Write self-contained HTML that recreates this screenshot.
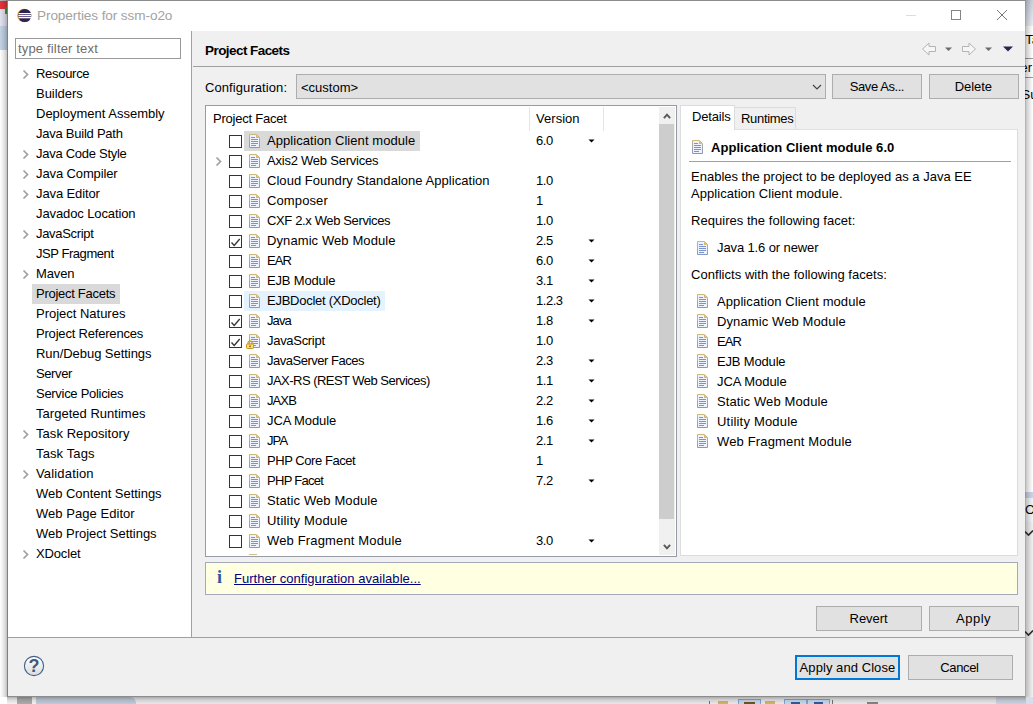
<!DOCTYPE html>
<html><head><meta charset="utf-8"><title>Properties for ssm-o2o</title>
<style>
html,body{margin:0;padding:0;}
body{width:1033px;height:704px;overflow:hidden;position:relative;background:#fff;font-family:"Liberation Sans",sans-serif;font-size:13px;color:#000;}
div,span,svg,a{position:absolute;box-sizing:border-box;}
.t{white-space:nowrap;line-height:16px;height:16px;letter-spacing:-0.1px;margin-top:1px;}
.b{font-weight:bold;}
.btn{background:#e1e1e1;border:1px solid #adadad;height:25px;}
.btn span{position:absolute;left:0;right:0;top:0;text-align:center;line-height:23px;white-space:nowrap;}
.cb{width:13px;height:13px;border:1px solid #333;background:#fff;}
.doc,.chev{display:block;}
</style></head><body>
<svg width="0" height="0" style="left:0;top:0"><defs><linearGradient id="dg" x1="0" y1="0" x2="0" y2="1"><stop offset="0" stop-color="#cdb77e"/><stop offset="0.45" stop-color="#a9a9ac"/><stop offset="1" stop-color="#8497c6"/></linearGradient></defs></svg>
<!-- backdrop -->
<div style="left:0;top:0;width:8px;height:704px;background:#fff"></div>
<div style="left:0;top:0;width:8px;height:9px;background:#e2353f"></div>
<div style="left:0;top:0;width:8px;height:1px;background:#b9b9b9"></div>
<div style="left:0;top:9px;width:8px;height:17px;background:#e2e3ef"></div>
<div style="left:5px;top:7px;width:3px;height:7px;background:#3f9a3f"></div>
<div style="left:0;top:26px;width:8px;height:24px;background:#c3d3e6"></div>
<div style="left:1025px;top:0;width:8px;height:704px;background:#fff"></div>
<div style="left:1025px;top:0;width:8px;height:26px;background:linear-gradient(#cbd1df,#eceff5)"></div>
<div style="left:1025px;top:58px;width:8px;height:1px;background:#9a9a9a"></div>
<div style="left:1025px;top:77px;width:8px;height:1px;background:#9a9a9a"></div>
<span class="t" style="left:1025.300px;top:31px;letter-spacing:0">Ta</span>
<span class="t" style="left:1020.500px;top:59px;letter-spacing:0">er</span>
<span class="t" style="left:1021.500px;top:86px;letter-spacing:0">Su</span>
<div style="left:1025px;top:492px;width:8px;height:212px;background:#f0f0f0"></div>
<div style="left:1025px;top:492px;width:8px;height:6px;background:#cdd5e9"></div>
<div style="left:1025px;top:498px;width:8px;height:24px;background:#f4f5f8"></div>
<span class="t" style="left:1025px;top:501px;letter-spacing:0">O</span>
<svg style="left:1025px;top:530px" width="8" height="8" viewBox="0 0 8 8"><path d="M0 1.500L3.500 5L8 0.500" fill="none" stroke="#333" stroke-width="1.600"/></svg>
<svg style="left:1025px;top:630px" width="8" height="8" viewBox="0 0 8 8"><path d="M0 1.500L3.500 5L8 0.500" fill="none" stroke="#333" stroke-width="1.600"/></svg>
<div style="left:0;top:696px;width:1033px;height:8px;background:#f4f4f6"></div>
<div style="left:0;top:696px;width:17px;height:8px;background:#fff"></div>
<div style="left:17px;top:696px;width:15px;height:8px;background:#b4b4b4"></div>
<div style="left:32px;top:696px;width:4px;height:8px;background:#fff"></div>
<div style="left:36px;top:697px;width:100px;height:10px;background:#c9d5e5;border-radius:0 6px 0 0"></div>
<div style="left:709px;top:701px;width:1px;height:3px;background:#777"></div>
<div style="left:718px;top:701px;width:10px;height:3px;background:#d9bf6a"></div>
<div style="left:738px;top:699px;width:23px;height:6px;background:#cfe3f7;border:1px solid #7fb0e0"></div>
<div style="left:744px;top:702px;width:11px;height:2px;background:#6b5a2a"></div>
<div style="left:765px;top:701px;width:10px;height:3px;background:#d9bf6a"></div>
<div style="left:784px;top:699px;width:23px;height:6px;background:#cfe3f7;border:1px solid #7fb0e0"></div>
<div style="left:807px;top:699px;width:23px;height:6px;background:#cfe3f7;border:1px solid #7fb0e0"></div>
<div style="left:791px;top:702px;width:9px;height:2px;background:#2f5fa8"></div>
<div style="left:814px;top:702px;width:9px;height:2px;background:#2f5fa8"></div>
<div style="left:832px;top:700px;width:1px;height:4px;background:#777"></div>
<div style="left:867px;top:702px;width:11px;height:2px;background:#8a8a8a"></div>
<div style="left:996px;top:697px;width:37px;height:7px;background:#d6deec"></div>
<!-- window -->
<div style="left:0;top:0;width:7px;height:697px;background:linear-gradient(to left,rgba(0,0,0,.24),rgba(0,0,0,.10) 3px,rgba(0,0,0,0) 7px)"></div>
<div style="left:1025px;top:0;width:8px;height:697px;background:linear-gradient(to right,rgba(0,0,0,.34),rgba(0,0,0,.20) 1.500px,rgba(0,0,0,.08) 5px,rgba(0,0,0,0) 8px)"></div>
<div style="left:7px;top:697px;width:1019px;height:7px;background:linear-gradient(to bottom,rgba(0,0,0,.30),rgba(0,0,0,.14) 3px,rgba(0,0,0,.05) 7px)"></div>
<div id="win" style="left:7px;top:0;width:1018px;height:697px;background:#f0f0f0;border:1px solid #8c8c8c;border-left-color:#808080;border-top-color:#8c8c8c;border-right:none"></div>
<div style="left:8px;top:1px;width:1017px;height:30px;background:#fff"></div>
<!-- title -->
<svg style="left:17px;top:8px" width="15" height="15" viewBox="0 0 15 15"><circle cx="7" cy="7.5" r="6.8" fill="#f7941e"/><circle cx="7.8" cy="7.5" r="6.6" fill="#2c2255"/><rect x="1.6" y="5" width="12.6" height="1.3" fill="#fff"/><rect x="1.3" y="7" width="13" height="1.3" fill="#fff"/><rect x="1.6" y="9" width="12.6" height="1.3" fill="#fff"/></svg>
<span id="t1" class="t" style="left:37px;top:7px;letter-spacing:-0.100px;color:#a2a2a2;font-size:13.600px;">Properties for ssm-o2o</span>
<svg style="left:906px;top:10px" width="12" height="10" viewBox="0 0 12 10"><path d="M0 5.5H10" stroke="#ddd" stroke-width="1"/></svg>
<svg style="left:950px;top:9px" width="12" height="12" viewBox="0 0 12 12"><rect x="1.5" y="1.5" width="9" height="9" fill="none" stroke="#858585" stroke-width="1"/></svg>
<svg style="left:996px;top:9px" width="12" height="12" viewBox="0 0 12 12"><path d="M1 1L11 11M11 1L1 11" stroke="#777" stroke-width="1"/></svg>
<!-- left pane -->
<div style="left:8px;top:31px;width:183px;height:606px;background:#fff"></div>
<div style="left:191px;top:31px;width:1px;height:606px;background:#a0a0a0"></div>
<div style="left:15px;top:38px;width:166px;height:21px;border:1px solid #999;background:#fff"></div>
<span id="t2" class="t" style="left:18px;top:40px;letter-spacing:0.166px;color:#6d6d6d;">type filter text</span>
<svg class="chev" style="left:22px;top:69px" width="7" height="11" viewBox="0 0 7 11"><path d="M1.5 1.5L5.5 5.5L1.500 9.500" fill="none" stroke="#a0a0a0" stroke-width="1.700"/></svg>
<span id="t3" class="t" style="left:36px;top:65px;letter-spacing:-0.292px;">Resource</span>
<span id="t4" class="t" style="left:36px;top:85px;letter-spacing:-0.024px;">Builders</span>
<span id="t5" class="t" style="left:36px;top:105px;letter-spacing:-0.001px;">Deployment Assembly</span>
<span id="t6" class="t" style="left:36px;top:125px;letter-spacing:-0.246px;">Java Build Path</span>
<svg class="chev" style="left:22px;top:149px" width="7" height="11" viewBox="0 0 7 11"><path d="M1.5 1.5L5.5 5.5L1.500 9.500" fill="none" stroke="#a0a0a0" stroke-width="1.700"/></svg>
<span id="t7" class="t" style="left:36px;top:145px;letter-spacing:-0.277px;">Java Code Style</span>
<svg class="chev" style="left:22px;top:169px" width="7" height="11" viewBox="0 0 7 11"><path d="M1.5 1.5L5.5 5.5L1.500 9.500" fill="none" stroke="#a0a0a0" stroke-width="1.700"/></svg>
<span id="t8" class="t" style="left:36px;top:165px;letter-spacing:-0.116px;">Java Compiler</span>
<svg class="chev" style="left:22px;top:189px" width="7" height="11" viewBox="0 0 7 11"><path d="M1.5 1.5L5.5 5.5L1.500 9.500" fill="none" stroke="#a0a0a0" stroke-width="1.700"/></svg>
<span id="t9" class="t" style="left:36px;top:185px;letter-spacing:-0.115px;">Java Editor</span>
<span id="t10" class="t" style="left:36px;top:205px;letter-spacing:-0.106px;">Javadoc Location</span>
<svg class="chev" style="left:22px;top:229px" width="7" height="11" viewBox="0 0 7 11"><path d="M1.5 1.5L5.5 5.5L1.500 9.500" fill="none" stroke="#a0a0a0" stroke-width="1.700"/></svg>
<span id="t11" class="t" style="left:36px;top:225px;letter-spacing:-0.311px;">JavaScript</span>
<span id="t12" class="t" style="left:36px;top:245px;letter-spacing:-0.442px;">JSP Fragment</span>
<svg class="chev" style="left:22px;top:269px" width="7" height="11" viewBox="0 0 7 11"><path d="M1.5 1.5L5.5 5.5L1.500 9.500" fill="none" stroke="#a0a0a0" stroke-width="1.700"/></svg>
<span id="t13" class="t" style="left:36px;top:265px;letter-spacing:-0.108px;">Maven</span>
<div style="left:32px;top:284px;width:88px;height:20px;background:#d9d9d9"></div>
<span id="t14" class="t" style="left:36px;top:285px;letter-spacing:-0.276px;">Project Facets</span>
<span id="t15" class="t" style="left:36px;top:305px;letter-spacing:-0.014px;">Project Natures</span>
<span id="t16" class="t" style="left:36px;top:325px;letter-spacing:-0.192px;">Project References</span>
<span id="t17" class="t" style="left:36px;top:345px;letter-spacing:-0.051px;">Run/Debug Settings</span>
<span id="t18" class="t" style="left:36px;top:365px;letter-spacing:-0.399px;">Server</span>
<span id="t19" class="t" style="left:36px;top:385px;letter-spacing:-0.291px;">Service Policies</span>
<span id="t20" class="t" style="left:36px;top:405px;letter-spacing:0.023px;">Targeted Runtimes</span>
<svg class="chev" style="left:22px;top:429px" width="7" height="11" viewBox="0 0 7 11"><path d="M1.5 1.5L5.5 5.5L1.500 9.500" fill="none" stroke="#a0a0a0" stroke-width="1.700"/></svg>
<span id="t21" class="t" style="left:36px;top:425px;letter-spacing:0.065px;">Task Repository</span>
<span id="t22" class="t" style="left:36px;top:445px;letter-spacing:0.128px;">Task Tags</span>
<svg class="chev" style="left:22px;top:469px" width="7" height="11" viewBox="0 0 7 11"><path d="M1.5 1.5L5.5 5.5L1.500 9.500" fill="none" stroke="#a0a0a0" stroke-width="1.700"/></svg>
<span id="t23" class="t" style="left:36px;top:465px;letter-spacing:0.162px;">Validation</span>
<span id="t24" class="t" style="left:36px;top:485px;letter-spacing:-0.033px;">Web Content Settings</span>
<span id="t25" class="t" style="left:36px;top:505px;letter-spacing:0.047px;">Web Page Editor</span>
<span id="t26" class="t" style="left:36px;top:525px;letter-spacing:-0.029px;">Web Project Settings</span>
<svg class="chev" style="left:22px;top:549px" width="7" height="11" viewBox="0 0 7 11"><path d="M1.5 1.5L5.5 5.5L1.500 9.500" fill="none" stroke="#a0a0a0" stroke-width="1.700"/></svg>
<span id="t27" class="t" style="left:36px;top:545px;letter-spacing:-0.139px;">XDoclet</span>
<!-- right header -->
<span id="t28" class="t b" style="left:205px;top:42px;letter-spacing:-0.561px;font-size:13.500px;">Project Facets</span>
<div style="left:193px;top:66px;width:832px;height:1px;background:#a0a0a0"></div>
<svg style="left:921px;top:41px" width="100" height="16" viewBox="0 0 100 16">
<path d="M1.5 8L8 2V5.5H14.5V10.5H8V14Z" fill="#f6f6f6" stroke="#b4b4b4"/>
<path d="M24 6.5H31L27.5 10Z" fill="#6c6c6c"/>
<path d="M54.500 8L48 2V5.500H41.500V10.500H48V14Z" fill="#f6f6f6" stroke="#b4b4b4"/>
<path d="M64 6.500H71L67.500 10Z" fill="#6c6c6c"/>
<path d="M82 5.500H92L87 10.500Z" fill="#2d2150"/>
</svg>
<span id="t29" class="t" style="left:205px;top:79px;letter-spacing:0.081px;">Configuration:</span>
<div style="left:296px;top:74px;width:530px;height:25px;background:#e1e1e1;border:1px solid #adadad"></div>
<span id="t30" class="t" style="left:301px;top:79px;letter-spacing:0.001px;">&lt;custom&gt;</span>
<svg style="left:812px;top:84px" width="10" height="7" viewBox="0 0 10 7"><path d="M1 1L5 5L9 1" fill="none" stroke="#444" stroke-width="1.2"/></svg>
<div class="btn" style="left:832px;top:74px;width:90px"></div>
<div class="btn" style="left:929px;top:74px;width:90px"></div>
<!-- table -->
<div style="left:205px;top:105px;width:472px;height:452px;background:#fff;border:1px solid #969ba7"></div>
<span id="t31" class="t" style="left:849.8px;top:78px;letter-spacing:-0.427px;">Save As...</span>
<span id="t32" class="t" style="left:954.8px;top:78px;letter-spacing:-0.076px;">Delete</span>
<span id="t33" class="t" style="left:213px;top:110px;letter-spacing:-0.224px;">Project Facet</span>
<span id="t34" class="t" style="left:536px;top:110px;letter-spacing:0.038px;">Version</span>
<div style="left:529px;top:107px;width:1px;height:24px;background:#e5e5e5"></div>
<div style="left:603px;top:107px;width:1px;height:24px;background:#e5e5e5"></div>
<div style="left:659px;top:107px;width:16px;height:448px;background:#f0f0f0"></div>
<div style="left:659px;top:124px;width:15px;height:395px;background:#cdcdcd"></div>
<svg style="left:662px;top:111px" width="10" height="10" viewBox="0 0 10 10"><path d="M1.900 7.200L5 3.700L8.100 7.200" fill="none" stroke="#5a5a5a" stroke-width="2"/></svg>
<svg style="left:662px;top:541px" width="10" height="10" viewBox="0 0 10 10"><path d="M1.900 3.800L5 7.300L8.100 3.800" fill="none" stroke="#5a5a5a" stroke-width="2"/></svg>
<div style="left:244px;top:131px;width:176px;height:20px;background:#d9d9d9"></div>
<div class="cb" style="left:229px;top:135px"></div>
<svg class="doc" style="left:249px;top:134px" width="11" height="14" viewBox="0 0 11 14"><path d="M0.5 0.5H7.500L10.500 3.500V13.500H0.500Z" fill="#edf2fc" stroke="url(#dg)"/><path d="M7 0.500V4H10.500Z" fill="#d8ba70"/><path d="M2 3.500H6M2 5.500H9M2 7.500H9M2 9.500H9M2 11.500H7" stroke="#7b93cb" stroke-width="1"/></svg>
<span id="t35" class="t" style="left:267px;top:132px;letter-spacing:0.062px;">Application Client module</span>
<span id="t36" class="t" style="left:536px;top:132px;letter-spacing:-0.389px;">6.0</span>
<svg style="left:588px;top:139px" width="7" height="4" viewBox="0 0 7 4"><path d="M0.500 0.500H6.500L3.500 3.500Z" fill="#000"/></svg>
<svg class="chev" style="left:215px;top:156px" width="7" height="11" viewBox="0 0 7 11"><path d="M1.5 1.5L5.5 5.5L1.500 9.500" fill="none" stroke="#a0a0a0" stroke-width="1.700"/></svg>
<div class="cb" style="left:229px;top:155px"></div>
<svg class="doc" style="left:249px;top:154px" width="11" height="14" viewBox="0 0 11 14"><path d="M0.5 0.5H7.500L10.500 3.500V13.500H0.500Z" fill="#edf2fc" stroke="url(#dg)"/><path d="M7 0.500V4H10.500Z" fill="#d8ba70"/><path d="M2 3.500H6M2 5.500H9M2 7.500H9M2 9.500H9M2 11.500H7" stroke="#7b93cb" stroke-width="1"/></svg>
<span id="t37" class="t" style="left:267px;top:152px;letter-spacing:-0.227px;">Axis2 Web Services</span>
<div class="cb" style="left:229px;top:175px"></div>
<svg class="doc" style="left:249px;top:174px" width="11" height="14" viewBox="0 0 11 14"><path d="M0.5 0.5H7.500L10.500 3.500V13.500H0.500Z" fill="#edf2fc" stroke="url(#dg)"/><path d="M7 0.500V4H10.500Z" fill="#d8ba70"/><path d="M2 3.500H6M2 5.500H9M2 7.500H9M2 9.500H9M2 11.500H7" stroke="#7b93cb" stroke-width="1"/></svg>
<span id="t38" class="t" style="left:267px;top:172px;letter-spacing:0.041px;">Cloud Foundry Standalone Application</span>
<span id="t39" class="t" style="left:536px;top:172px;letter-spacing:-0.389px;">1.0</span>
<div class="cb" style="left:229px;top:195px"></div>
<svg class="doc" style="left:249px;top:194px" width="11" height="14" viewBox="0 0 11 14"><path d="M0.5 0.5H7.500L10.500 3.500V13.500H0.500Z" fill="#edf2fc" stroke="url(#dg)"/><path d="M7 0.500V4H10.500Z" fill="#d8ba70"/><path d="M2 3.500H6M2 5.500H9M2 7.500H9M2 9.500H9M2 11.500H7" stroke="#7b93cb" stroke-width="1"/></svg>
<span id="t40" class="t" style="left:267px;top:192px;letter-spacing:0.119px;">Composer</span>
<span id="t41" class="t" style="left:536px;top:192px;letter-spacing:0;">1</span>
<div class="cb" style="left:229px;top:215px"></div>
<svg class="doc" style="left:249px;top:214px" width="11" height="14" viewBox="0 0 11 14"><path d="M0.5 0.5H7.500L10.500 3.500V13.500H0.500Z" fill="#edf2fc" stroke="url(#dg)"/><path d="M7 0.500V4H10.500Z" fill="#d8ba70"/><path d="M2 3.500H6M2 5.500H9M2 7.500H9M2 9.500H9M2 11.500H7" stroke="#7b93cb" stroke-width="1"/></svg>
<span id="t42" class="t" style="left:267px;top:212px;letter-spacing:-0.365px;">CXF 2.x Web Services</span>
<span id="t43" class="t" style="left:536px;top:212px;letter-spacing:-0.389px;">1.0</span>
<div class="cb" style="left:229px;top:235px"></div>
<svg style="left:230px;top:237px" width="11" height="11" viewBox="0 0 11 11"><path d="M1.500 5.500L4.200 8.500L9.700 2" fill="none" stroke="#333" stroke-width="1.300"/></svg>
<svg class="doc" style="left:249px;top:234px" width="11" height="14" viewBox="0 0 11 14"><path d="M0.5 0.5H7.500L10.500 3.500V13.500H0.500Z" fill="#edf2fc" stroke="url(#dg)"/><path d="M7 0.500V4H10.500Z" fill="#d8ba70"/><path d="M2 3.500H6M2 5.500H9M2 7.500H9M2 9.500H9M2 11.500H7" stroke="#7b93cb" stroke-width="1"/></svg>
<span id="t44" class="t" style="left:267px;top:232px;letter-spacing:0.093px;">Dynamic Web Module</span>
<span id="t45" class="t" style="left:536px;top:232px;letter-spacing:-0.389px;">2.5</span>
<svg style="left:588px;top:239px" width="7" height="4" viewBox="0 0 7 4"><path d="M0.500 0.500H6.500L3.500 3.500Z" fill="#000"/></svg>
<div class="cb" style="left:229px;top:255px"></div>
<svg class="doc" style="left:249px;top:254px" width="11" height="14" viewBox="0 0 11 14"><path d="M0.5 0.5H7.500L10.500 3.500V13.500H0.500Z" fill="#edf2fc" stroke="url(#dg)"/><path d="M7 0.500V4H10.500Z" fill="#d8ba70"/><path d="M2 3.500H6M2 5.500H9M2 7.500H9M2 9.500H9M2 11.500H7" stroke="#7b93cb" stroke-width="1"/></svg>
<span id="t46" class="t" style="left:267px;top:252px;letter-spacing:-0.900px;">EAR</span>
<span id="t47" class="t" style="left:536px;top:252px;letter-spacing:-0.389px;">6.0</span>
<svg style="left:588px;top:259px" width="7" height="4" viewBox="0 0 7 4"><path d="M0.500 0.500H6.500L3.500 3.500Z" fill="#000"/></svg>
<div class="cb" style="left:229px;top:275px"></div>
<svg class="doc" style="left:249px;top:274px" width="11" height="14" viewBox="0 0 11 14"><path d="M0.5 0.5H7.500L10.500 3.500V13.500H0.500Z" fill="#edf2fc" stroke="url(#dg)"/><path d="M7 0.500V4H10.500Z" fill="#d8ba70"/><path d="M2 3.500H6M2 5.500H9M2 7.500H9M2 9.500H9M2 11.500H7" stroke="#7b93cb" stroke-width="1"/></svg>
<span id="t48" class="t" style="left:267px;top:272px;letter-spacing:-0.177px;">EJB Module</span>
<span id="t49" class="t" style="left:536px;top:272px;letter-spacing:-0.389px;">3.1</span>
<svg style="left:588px;top:279px" width="7" height="4" viewBox="0 0 7 4"><path d="M0.500 0.500H6.500L3.500 3.500Z" fill="#000"/></svg>
<div style="left:244px;top:291px;width:141px;height:20px;background:#e5f3ff"></div>
<div class="cb" style="left:229px;top:295px"></div>
<svg class="doc" style="left:249px;top:294px" width="11" height="14" viewBox="0 0 11 14"><path d="M0.5 0.5H7.500L10.500 3.500V13.500H0.500Z" fill="#edf2fc" stroke="url(#dg)"/><path d="M7 0.500V4H10.500Z" fill="#d8ba70"/><path d="M2 3.500H6M2 5.500H9M2 7.500H9M2 9.500H9M2 11.500H7" stroke="#7b93cb" stroke-width="1"/></svg>
<span id="t50" class="t" style="left:267px;top:292px;letter-spacing:-0.260px;">EJBDoclet (XDoclet)</span>
<span id="t51" class="t" style="left:536px;top:292px;letter-spacing:-0.480px;">1.2.3</span>
<svg style="left:588px;top:299px" width="7" height="4" viewBox="0 0 7 4"><path d="M0.500 0.500H6.500L3.500 3.500Z" fill="#000"/></svg>
<div class="cb" style="left:229px;top:315px"></div>
<svg style="left:230px;top:317px" width="11" height="11" viewBox="0 0 11 11"><path d="M1.500 5.500L4.200 8.500L9.700 2" fill="none" stroke="#333" stroke-width="1.300"/></svg>
<svg class="doc" style="left:249px;top:314px" width="11" height="14" viewBox="0 0 11 14"><path d="M0.5 0.5H7.500L10.500 3.500V13.500H0.500Z" fill="#edf2fc" stroke="url(#dg)"/><path d="M7 0.500V4H10.500Z" fill="#d8ba70"/><path d="M2 3.500H6M2 5.500H9M2 7.500H9M2 9.500H9M2 11.500H7" stroke="#7b93cb" stroke-width="1"/></svg>
<span id="t52" class="t" style="left:267px;top:312px;letter-spacing:-0.900px;">Java</span>
<span id="t53" class="t" style="left:536px;top:312px;letter-spacing:-0.389px;">1.8</span>
<svg style="left:588px;top:319px" width="7" height="4" viewBox="0 0 7 4"><path d="M0.500 0.500H6.500L3.500 3.500Z" fill="#000"/></svg>
<div class="cb" style="left:229px;top:335px"></div>
<svg style="left:230px;top:337px" width="11" height="11" viewBox="0 0 11 11"><path d="M1.500 5.500L4.200 8.500L9.700 2" fill="none" stroke="#333" stroke-width="1.300"/></svg>
<svg class="doc" style="left:249px;top:334px" width="11" height="14" viewBox="0 0 11 14"><path d="M0.5 0.5H7.500L10.500 3.500V13.500H0.500Z" fill="#edf2fc" stroke="url(#dg)"/><path d="M7 0.500V4H10.500Z" fill="#d8ba70"/><path d="M2 3.500H6M2 5.500H9M2 7.500H9M2 9.500H9M2 11.500H7" stroke="#7b93cb" stroke-width="1"/></svg>
<svg style="left:246px;top:340px" width="8" height="9" viewBox="0 0 8 9"><path d="M2 4.500V3A2 2 0 0 1 6 3V4.500" fill="none" stroke="#c9a134" stroke-width="1.3"/><rect x="0.500" y="4" width="7" height="4.500" rx="0.800" fill="#f8dc72" stroke="#c8981e"/><rect x="3.300" y="5.500" width="1.400" height="1.600" fill="#7a5a10"/></svg>
<span id="t54" class="t" style="left:267px;top:332px;letter-spacing:-0.300px;">JavaScript</span>
<span id="t55" class="t" style="left:536px;top:332px;letter-spacing:-0.389px;">1.0</span>
<div class="cb" style="left:229px;top:355px"></div>
<svg class="doc" style="left:249px;top:354px" width="11" height="14" viewBox="0 0 11 14"><path d="M0.5 0.5H7.500L10.500 3.500V13.500H0.500Z" fill="#edf2fc" stroke="url(#dg)"/><path d="M7 0.500V4H10.500Z" fill="#d8ba70"/><path d="M2 3.500H6M2 5.500H9M2 7.500H9M2 9.500H9M2 11.500H7" stroke="#7b93cb" stroke-width="1"/></svg>
<span id="t56" class="t" style="left:267px;top:352px;letter-spacing:-0.478px;">JavaServer Faces</span>
<span id="t57" class="t" style="left:536px;top:352px;letter-spacing:-0.389px;">2.3</span>
<svg style="left:588px;top:359px" width="7" height="4" viewBox="0 0 7 4"><path d="M0.500 0.500H6.500L3.500 3.500Z" fill="#000"/></svg>
<div class="cb" style="left:229px;top:375px"></div>
<svg class="doc" style="left:249px;top:374px" width="11" height="14" viewBox="0 0 11 14"><path d="M0.5 0.5H7.500L10.500 3.500V13.500H0.500Z" fill="#edf2fc" stroke="url(#dg)"/><path d="M7 0.500V4H10.500Z" fill="#d8ba70"/><path d="M2 3.500H6M2 5.500H9M2 7.500H9M2 9.500H9M2 11.500H7" stroke="#7b93cb" stroke-width="1"/></svg>
<span id="t58" class="t" style="left:267px;top:372px;letter-spacing:-0.529px;">JAX-RS (REST Web Services)</span>
<span id="t59" class="t" style="left:536px;top:372px;letter-spacing:-0.389px;">1.1</span>
<svg style="left:588px;top:379px" width="7" height="4" viewBox="0 0 7 4"><path d="M0.500 0.500H6.500L3.500 3.500Z" fill="#000"/></svg>
<div class="cb" style="left:229px;top:395px"></div>
<svg class="doc" style="left:249px;top:394px" width="11" height="14" viewBox="0 0 11 14"><path d="M0.5 0.5H7.500L10.500 3.500V13.500H0.500Z" fill="#edf2fc" stroke="url(#dg)"/><path d="M7 0.500V4H10.500Z" fill="#d8ba70"/><path d="M2 3.500H6M2 5.500H9M2 7.500H9M2 9.500H9M2 11.500H7" stroke="#7b93cb" stroke-width="1"/></svg>
<span id="t60" class="t" style="left:267px;top:392px;letter-spacing:-0.900px;">JAXB</span>
<span id="t61" class="t" style="left:536px;top:392px;letter-spacing:-0.389px;">2.2</span>
<svg style="left:588px;top:399px" width="7" height="4" viewBox="0 0 7 4"><path d="M0.500 0.500H6.500L3.500 3.500Z" fill="#000"/></svg>
<div class="cb" style="left:229px;top:415px"></div>
<svg class="doc" style="left:249px;top:414px" width="11" height="14" viewBox="0 0 11 14"><path d="M0.5 0.5H7.500L10.500 3.500V13.500H0.500Z" fill="#edf2fc" stroke="url(#dg)"/><path d="M7 0.500V4H10.500Z" fill="#d8ba70"/><path d="M2 3.500H6M2 5.500H9M2 7.500H9M2 9.500H9M2 11.500H7" stroke="#7b93cb" stroke-width="1"/></svg>
<span id="t62" class="t" style="left:267px;top:412px;letter-spacing:-0.099px;">JCA Module</span>
<span id="t63" class="t" style="left:536px;top:412px;letter-spacing:-0.389px;">1.6</span>
<svg style="left:588px;top:419px" width="7" height="4" viewBox="0 0 7 4"><path d="M0.500 0.500H6.500L3.500 3.500Z" fill="#000"/></svg>
<div class="cb" style="left:229px;top:435px"></div>
<svg class="doc" style="left:249px;top:434px" width="11" height="14" viewBox="0 0 11 14"><path d="M0.5 0.5H7.500L10.500 3.500V13.500H0.500Z" fill="#edf2fc" stroke="url(#dg)"/><path d="M7 0.500V4H10.500Z" fill="#d8ba70"/><path d="M2 3.500H6M2 5.500H9M2 7.500H9M2 9.500H9M2 11.500H7" stroke="#7b93cb" stroke-width="1"/></svg>
<span id="t64" class="t" style="left:267px;top:432px;letter-spacing:-0.900px;">JPA</span>
<span id="t65" class="t" style="left:536px;top:432px;letter-spacing:-0.389px;">2.1</span>
<svg style="left:588px;top:439px" width="7" height="4" viewBox="0 0 7 4"><path d="M0.500 0.500H6.500L3.500 3.500Z" fill="#000"/></svg>
<div class="cb" style="left:229px;top:455px"></div>
<svg class="doc" style="left:249px;top:454px" width="11" height="14" viewBox="0 0 11 14"><path d="M0.5 0.5H7.500L10.500 3.500V13.500H0.500Z" fill="#edf2fc" stroke="url(#dg)"/><path d="M7 0.500V4H10.500Z" fill="#d8ba70"/><path d="M2 3.500H6M2 5.500H9M2 7.500H9M2 9.500H9M2 11.500H7" stroke="#7b93cb" stroke-width="1"/></svg>
<span id="t66" class="t" style="left:267px;top:452px;letter-spacing:-0.440px;">PHP Core Facet</span>
<span id="t67" class="t" style="left:536px;top:452px;letter-spacing:0;">1</span>
<div class="cb" style="left:229px;top:475px"></div>
<svg class="doc" style="left:249px;top:474px" width="11" height="14" viewBox="0 0 11 14"><path d="M0.5 0.5H7.500L10.500 3.500V13.500H0.500Z" fill="#edf2fc" stroke="url(#dg)"/><path d="M7 0.500V4H10.500Z" fill="#d8ba70"/><path d="M2 3.500H6M2 5.500H9M2 7.500H9M2 9.500H9M2 11.500H7" stroke="#7b93cb" stroke-width="1"/></svg>
<span id="t68" class="t" style="left:267px;top:472px;letter-spacing:-0.716px;">PHP Facet</span>
<span id="t69" class="t" style="left:536px;top:472px;letter-spacing:-0.389px;">7.2</span>
<svg style="left:588px;top:479px" width="7" height="4" viewBox="0 0 7 4"><path d="M0.500 0.500H6.500L3.500 3.500Z" fill="#000"/></svg>
<div class="cb" style="left:229px;top:495px"></div>
<svg class="doc" style="left:249px;top:494px" width="11" height="14" viewBox="0 0 11 14"><path d="M0.5 0.5H7.500L10.500 3.500V13.500H0.500Z" fill="#edf2fc" stroke="url(#dg)"/><path d="M7 0.500V4H10.500Z" fill="#d8ba70"/><path d="M2 3.500H6M2 5.500H9M2 7.500H9M2 9.500H9M2 11.500H7" stroke="#7b93cb" stroke-width="1"/></svg>
<span id="t70" class="t" style="left:267px;top:492px;letter-spacing:0.108px;">Static Web Module</span>
<div class="cb" style="left:229px;top:515px"></div>
<svg class="doc" style="left:249px;top:514px" width="11" height="14" viewBox="0 0 11 14"><path d="M0.5 0.5H7.500L10.500 3.500V13.500H0.500Z" fill="#edf2fc" stroke="url(#dg)"/><path d="M7 0.500V4H10.500Z" fill="#d8ba70"/><path d="M2 3.500H6M2 5.500H9M2 7.500H9M2 9.500H9M2 11.500H7" stroke="#7b93cb" stroke-width="1"/></svg>
<span id="t71" class="t" style="left:267px;top:512px;letter-spacing:0.198px;">Utility Module</span>
<div class="cb" style="left:229px;top:535px"></div>
<svg class="doc" style="left:249px;top:534px" width="11" height="14" viewBox="0 0 11 14"><path d="M0.5 0.5H7.500L10.500 3.500V13.500H0.500Z" fill="#edf2fc" stroke="url(#dg)"/><path d="M7 0.500V4H10.500Z" fill="#d8ba70"/><path d="M2 3.500H6M2 5.500H9M2 7.500H9M2 9.500H9M2 11.500H7" stroke="#7b93cb" stroke-width="1"/></svg>
<span id="t72" class="t" style="left:267px;top:532px;letter-spacing:0.150px;">Web Fragment Module</span>
<span id="t73" class="t" style="left:536px;top:532px;letter-spacing:-0.389px;">3.0</span>
<svg style="left:588px;top:539px" width="7" height="4" viewBox="0 0 7 4"><path d="M0.500 0.500H6.500L3.500 3.500Z" fill="#000"/></svg>
<div style="left:249px;top:554px;width:8px;height:1px;background:#d2bf88"></div>
<!-- details -->
<div style="left:680px;top:129px;width:338px;height:427px;background:#fff;border:1px solid #dcdcdc;border-top-color:#e0e0e0"></div>
<div style="left:680px;top:105px;width:55px;height:25px;background:#fff;border:1px solid #dcdcdc;border-bottom:none"></div>
<div style="left:734px;top:107px;width:62px;height:22px;background:#f0f0f0;border:1px solid #dcdcdc;border-bottom:none"></div>
<span id="t74" class="t" style="left:692px;top:108px;letter-spacing:-0.158px;">Details</span>
<span id="t75" class="t" style="left:741px;top:110px;letter-spacing:-0.317px;">Runtimes</span>
<svg class="doc" style="left:692px;top:140px" width="11" height="14" viewBox="0 0 11 14"><path d="M0.5 0.5H7.500L10.500 3.500V13.500H0.500Z" fill="#edf2fc" stroke="url(#dg)"/><path d="M7 0.500V4H10.500Z" fill="#d8ba70"/><path d="M2 3.500H6M2 5.500H9M2 7.500H9M2 9.500H9M2 11.500H7" stroke="#7b93cb" stroke-width="1"/></svg>
<span id="t76" class="t b" style="left:711px;top:139px;letter-spacing:0.045px;">Application Client module 6.0</span>
<div style="left:689px;top:161px;width:322px;height:1px;background:#a0a0a0"></div>
<span id="t77" class="t" style="left:691px;top:168px;letter-spacing:0.004px;">Enables the project to be deployed as a Java EE</span>
<span id="t78" class="t" style="left:691px;top:185px;letter-spacing:0.048px;">Application Client module.</span>
<span id="t79" class="t" style="left:691px;top:212px;letter-spacing:0.035px;">Requires the following facet:</span>
<svg class="doc" style="left:697px;top:241px" width="11" height="14" viewBox="0 0 11 14"><path d="M0.5 0.5H7.500L10.500 3.500V13.500H0.500Z" fill="#edf2fc" stroke="url(#dg)"/><path d="M7 0.500V4H10.500Z" fill="#d8ba70"/><path d="M2 3.500H6M2 5.500H9M2 7.500H9M2 9.500H9M2 11.500H7" stroke="#7b93cb" stroke-width="1"/></svg>
<span id="t80" class="t" style="left:717px;top:239px;letter-spacing:-0.115px;">Java 1.6 or newer</span>
<span id="t81" class="t" style="left:691px;top:266px;letter-spacing:0.044px;">Conflicts with the following facets:</span>
<svg class="doc" style="left:697px;top:294px" width="11" height="14" viewBox="0 0 11 14"><path d="M0.5 0.5H7.500L10.500 3.500V13.500H0.500Z" fill="#edf2fc" stroke="url(#dg)"/><path d="M7 0.500V4H10.500Z" fill="#d8ba70"/><path d="M2 3.500H6M2 5.500H9M2 7.500H9M2 9.500H9M2 11.500H7" stroke="#7b93cb" stroke-width="1"/></svg>
<span id="t82" class="t" style="left:717px;top:293px;letter-spacing:0.083px;">Application Client module</span>
<svg class="doc" style="left:697px;top:314px" width="11" height="14" viewBox="0 0 11 14"><path d="M0.5 0.5H7.500L10.500 3.500V13.500H0.500Z" fill="#edf2fc" stroke="url(#dg)"/><path d="M7 0.500V4H10.500Z" fill="#d8ba70"/><path d="M2 3.500H6M2 5.500H9M2 7.500H9M2 9.500H9M2 11.500H7" stroke="#7b93cb" stroke-width="1"/></svg>
<span id="t83" class="t" style="left:717px;top:313px;letter-spacing:0.105px;">Dynamic Web Module</span>
<svg class="doc" style="left:697px;top:334px" width="11" height="14" viewBox="0 0 11 14"><path d="M0.5 0.5H7.500L10.500 3.500V13.500H0.500Z" fill="#edf2fc" stroke="url(#dg)"/><path d="M7 0.500V4H10.500Z" fill="#d8ba70"/><path d="M2 3.500H6M2 5.500H9M2 7.500H9M2 9.500H9M2 11.500H7" stroke="#7b93cb" stroke-width="1"/></svg>
<span id="t84" class="t" style="left:717px;top:333px;letter-spacing:-0.900px;">EAR</span>
<svg class="doc" style="left:697px;top:354px" width="11" height="14" viewBox="0 0 11 14"><path d="M0.5 0.5H7.500L10.500 3.500V13.500H0.500Z" fill="#edf2fc" stroke="url(#dg)"/><path d="M7 0.500V4H10.500Z" fill="#d8ba70"/><path d="M2 3.500H6M2 5.500H9M2 7.500H9M2 9.500H9M2 11.500H7" stroke="#7b93cb" stroke-width="1"/></svg>
<span id="t85" class="t" style="left:717px;top:353px;letter-spacing:-0.166px;">EJB Module</span>
<svg class="doc" style="left:697px;top:374px" width="11" height="14" viewBox="0 0 11 14"><path d="M0.5 0.5H7.500L10.500 3.500V13.500H0.500Z" fill="#edf2fc" stroke="url(#dg)"/><path d="M7 0.500V4H10.500Z" fill="#d8ba70"/><path d="M2 3.500H6M2 5.500H9M2 7.500H9M2 9.500H9M2 11.500H7" stroke="#7b93cb" stroke-width="1"/></svg>
<span id="t86" class="t" style="left:717px;top:373px;letter-spacing:-0.044px;">JCA Module</span>
<svg class="doc" style="left:697px;top:394px" width="11" height="14" viewBox="0 0 11 14"><path d="M0.5 0.5H7.500L10.500 3.500V13.500H0.500Z" fill="#edf2fc" stroke="url(#dg)"/><path d="M7 0.500V4H10.500Z" fill="#d8ba70"/><path d="M2 3.500H6M2 5.500H9M2 7.500H9M2 9.500H9M2 11.500H7" stroke="#7b93cb" stroke-width="1"/></svg>
<span id="t87" class="t" style="left:717px;top:393px;letter-spacing:0.120px;">Static Web Module</span>
<svg class="doc" style="left:697px;top:414px" width="11" height="14" viewBox="0 0 11 14"><path d="M0.5 0.5H7.500L10.500 3.500V13.500H0.500Z" fill="#edf2fc" stroke="url(#dg)"/><path d="M7 0.500V4H10.500Z" fill="#d8ba70"/><path d="M2 3.500H6M2 5.500H9M2 7.500H9M2 9.500H9M2 11.500H7" stroke="#7b93cb" stroke-width="1"/></svg>
<span id="t88" class="t" style="left:717px;top:413px;letter-spacing:0.190px;">Utility Module</span>
<svg class="doc" style="left:697px;top:434px" width="11" height="14" viewBox="0 0 11 14"><path d="M0.5 0.5H7.500L10.500 3.500V13.500H0.500Z" fill="#edf2fc" stroke="url(#dg)"/><path d="M7 0.500V4H10.500Z" fill="#d8ba70"/><path d="M2 3.500H6M2 5.500H9M2 7.500H9M2 9.500H9M2 11.500H7" stroke="#7b93cb" stroke-width="1"/></svg>
<span id="t89" class="t" style="left:717px;top:433px;letter-spacing:0.150px;">Web Fragment Module</span>
<!-- info bar -->
<div style="left:205px;top:562px;width:813px;height:33px;background:#ffffe1;border:1px solid #a6aab8"></div>
<span class="t" style="left:217px;top:568px;color:#2f55a4;font-family:'Liberation Serif',serif;font-weight:bold;font-size:18px;letter-spacing:0">i</span>
<a id="t90" class="t" style="left:234px;top:570px;letter-spacing:0.030px;color:#000080;text-decoration:underline;">Further configuration available...</a>
<div class="btn" style="left:816px;top:606px;width:106px"></div>
<div class="btn" style="left:929px;top:606px;width:90px"></div>
<div style="left:8px;top:637px;width:1017px;height:1px;background:#a0a0a0"></div>
<div class="btn" style="left:795px;top:655px;width:105px;border:2px solid #0078d7"></div>
<div class="btn" style="left:908px;top:655px;width:105px"></div>
<span id="t91" class="t" style="left:849.6px;top:610px;letter-spacing:-0.059px;">Revert</span>
<span id="t92" class="t" style="left:956px;top:610px;letter-spacing:0.517px;">Apply</span>
<span id="t93" class="t" style="left:799.6px;top:659px;letter-spacing:0.066px;">Apply and Close</span>
<span id="t94" class="t" style="left:940.2px;top:659px;letter-spacing:-0.334px;">Cancel</span>

<svg style="left:23px;top:655px" width="22" height="22" viewBox="0 0 22 22"><defs><linearGradient id="hg" x1="0" y1="0" x2="0" y2="1"><stop offset="0" stop-color="#ffffff"/><stop offset="1" stop-color="#dcdcdc"/></linearGradient></defs><circle cx="11" cy="11" r="9.600" fill="url(#hg)" stroke="#42608c" stroke-width="1.100"/><text x="10.900" y="17.300" text-anchor="middle" font-family="Liberation Sans, sans-serif" font-weight="bold" font-size="18" fill="#41597f">?</text></svg>
</body></html>
